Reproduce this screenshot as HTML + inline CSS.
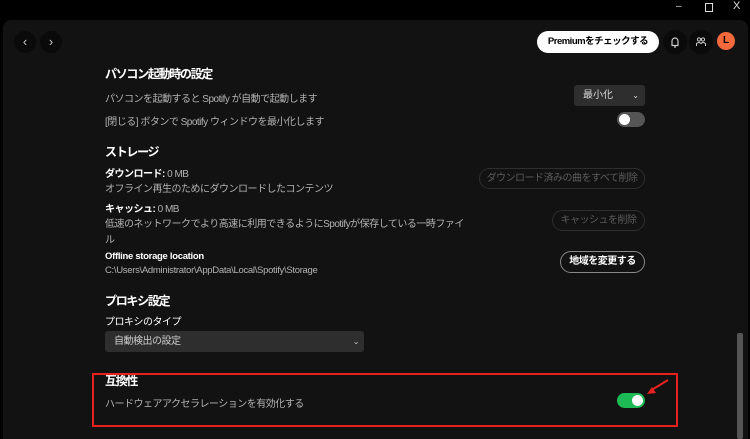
<!DOCTYPE html>
<html><head><meta charset="utf-8"><style>
*{margin:0;padding:0;box-sizing:border-box}
html,body{width:750px;height:439px;background:#000;overflow:hidden;position:relative;font-family:"Liberation Sans","Noto Sans CJK JP",sans-serif;color:#fff}
.panel{position:absolute;left:3px;top:20px;width:745px;height:440px;background:#121212;border-radius:8px}
.a{position:absolute;white-space:nowrap}
.h{font-size:12px;font-weight:bold;color:#fff;letter-spacing:-1.3px}
.t{font-size:10px;color:#b3b3b3;letter-spacing:-0.5px}
.w{font-size:10px;color:#fff;letter-spacing:-0.5px}
.nav{position:absolute;top:31px;width:22px;height:22px;border-radius:50%;background:#0a0a0a;color:#ccc;font-size:13px;text-align:center;line-height:21px}
.ic{position:absolute;top:30px;width:24px;height:24px;border-radius:50%;background:#0a0a0a}
.btn{position:absolute;border-radius:14px;font-size:10px;letter-spacing:-0.5px;text-align:center;white-space:nowrap}
.tog{position:absolute;width:28px;height:15px;border-radius:8px}
.tog i{position:absolute;top:2px;width:11px;height:11px;border-radius:50%;background:#fff}
</style></head><body>
<div class="a" style="left:676px;top:1px;color:#ddd;font-size:10px">–</div>
<div class="a" style="left:705px;top:3px;width:8px;height:9px;border:1.5px solid #ddd"></div>
<div class="a" style="left:733px;top:0px;color:#ddd;font-size:11px">X</div>
<div class="panel"></div>
<div class="nav" style="left:14px">‹</div>
<div class="nav" style="left:40px">›</div>
<div class="btn" style="left:537px;top:31px;width:122px;height:22px;line-height:22px;background:#fff;color:#000;font-weight:bold;font-size:9.5px">Premiumをチェックする</div>
<div class="ic" style="left:663px"><svg width="24" height="24" viewBox="0 0 24 24"><path d="M8.5 15.5h7M9 15.5V11a3 3 0 0 1 6 0v4.5M12 7.5v.5M11 17h2" stroke="#ccc" stroke-width="1.2" fill="none"/></svg></div>
<div class="ic" style="left:689px"><svg width="24" height="24" viewBox="0 0 24 24"><circle cx="10" cy="9.5" r="1.6" stroke="#ccc" fill="none"/><circle cx="14" cy="9.5" r="1.6" stroke="#ccc" fill="none"/><path d="M7.5 16v-2.5q2.5-2 4.5 0q2-2 4.5 0V16" stroke="#ccc" fill="none"/></svg></div>
<div class="a" style="left:717px;top:32px;width:18px;height:18px;border-radius:50%;background:#f26a3c;color:#000;font-size:10px;font-weight:bold;text-align:center;line-height:18px">L</div>

<div class="a h" style="left:105px;top:65px">パソコン起動時の設定</div>
<div class="a t" style="left:105px;top:90px">パソコンを起動すると Spotify が自動で起動します</div>
<div class="a" style="left:574px;top:85px;width:71px;height:21px;background:#2e2e2e;border-radius:3px;color:#ddd;font-size:10px;line-height:21px;padding-left:9px">最小化<span style="position:absolute;right:6px;font-size:8px">⌄</span></div>
<div class="a t" style="left:105px;top:113px">[閉じる] ボタンで Spotify ウィンドウを最小化します</div>
<div class="tog" style="left:617px;top:112px;background:#555"><i style="left:2px"></i></div>

<div class="a h" style="left:105px;top:143px">ストレージ</div>
<div class="a w" style="left:105px;top:165px"><b>ダウンロード:</b> <span style="color:#b3b3b3">0 MB</span></div>
<div class="a t" style="left:105px;top:180px">オフライン再生のためにダウンロードしたコンテンツ</div>
<div class="btn" style="left:479px;top:168px;width:166px;height:21px;line-height:19px;border:1px solid #2e2e2e;color:#5c5c5c">ダウンロード済みの曲をすべて削除</div>
<div class="a w" style="left:105px;top:200px"><b>キャッシュ:</b> <span style="color:#b3b3b3">0 MB</span></div>
<div class="a t" style="left:105px;top:215px">低速のネットワークでより高速に利用できるようにSpotifyが保存している一時ファイ</div>
<div class="a t" style="left:105px;top:231px">ル</div>
<div class="btn" style="left:552px;top:210px;width:93px;height:21px;line-height:19px;border:1px solid #2e2e2e;color:#5c5c5c">キャッシュを削除</div>
<div class="a w" style="left:105px;top:251px;font-weight:bold;font-size:9.5px;letter-spacing:-0.3px">Offline storage location</div>
<div class="a t" style="left:105px;top:265px;font-size:9.5px;letter-spacing:-0.3px">C:\Users\Administrator\AppData\Local\Spotify\Storage</div>
<div class="btn" style="left:560px;top:251px;width:85px;height:22px;line-height:20px;border:1px solid #888;color:#fff;font-weight:bold">地域を変更する</div>

<div class="a h" style="left:105px;top:292px">プロキシ設定</div>
<div class="a w" style="left:105px;top:313px">プロキシのタイプ</div>
<div class="a" style="left:105px;top:331px;width:259px;height:21px;background:#2e2e2e;border-radius:3px;color:#ccc;font-size:10px;letter-spacing:-0.5px;line-height:21px;padding-left:9px">自動検出の設定<span style="position:absolute;right:5px;font-size:8px">⌄</span></div>

<div class="a h" style="left:105px;top:372px">互換性</div>
<div class="a t" style="left:105px;top:395px">ハードウェアアクセラレーションを有効化する</div>
<div class="tog" style="left:617px;top:393px;background:#1db954"><i style="left:15px"></i></div>
<div class="a" style="left:92px;top:373px;width:586px;height:54px;border:2px solid #e8231f"></div>
<svg class="a" style="left:640px;top:376px" width="35" height="22"><path d="M28 4L10 15" stroke="#e8231f" stroke-width="2"/><path d="M7 18l9-1-4-6z" fill="#e8231f"/></svg>
<div class="a" style="left:737px;top:333px;width:6px;height:106px;background:#555;border-radius:2px"></div>
</body></html>
